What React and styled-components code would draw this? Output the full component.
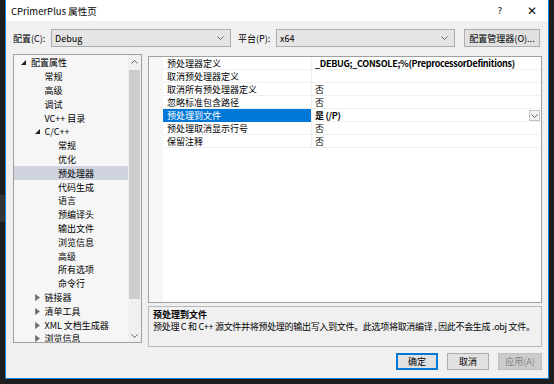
import React from "react";
import styled, { createGlobalStyle, css } from "styled-components";

const Global = createGlobalStyle`
  html, body { margin: 0; padding: 0; }
  body { background: #1e1e1e; font-family: "Noto Sans CJK SC", "Noto Sans", sans-serif; }
  * { box-sizing: border-box; }
`;

const Page = styled.div`
  width: 554px;
  height: 384px;
  overflow: hidden;
  padding: 0 5px 5px 5px;
  background:
    linear-gradient(#343434, #343434) 0 195px / 5px 27px no-repeat,
    #1e1e1e;
`;

const Window = styled.div`
  width: 544px;
  height: 379px;
  display: flex;
  flex-direction: column;
  border: 1px solid #1883d7;
  border-top: none;
  background: #f0f0f0;
  overflow: hidden;
`;

const TitleBar = styled.div`
  height: 21px;
  flex: none;
  background: #fff;
  display: flex;
  align-items: center;
  padding: 0 0 0 5px;
  font-size: 9.5px;
  color: #000;
`;

const Title = styled.span`
  flex: 1;
`;

const TitleBtn = styled.span`
  width: 32px;
  text-align: center;
  font-size: ${(p) => p.$size || 10}px;
  color: #111;
  font-family: "DejaVu Sans", sans-serif;
`;

const Body = styled.div`
  flex: 1;
  min-width: 0;
  display: flex;
  flex-direction: column;
  padding: 0 6px 8px 7px;
  font-size: 9px;
  color: #000;
`;

const ConfigRow = styled.div`
  display: flex;
  align-items: center;
  margin-top: 8px;
  height: 18px;
`;

const Label = styled.span`
  width: ${(p) => p.$w}px;
  flex: none;
`;

const Combo = styled.div`
  width: ${(p) => p.$w}px;
  height: 18px;
  flex: none;
  border: 1px solid #acacac;
  background: #e5e5e5;
  display: flex;
  align-items: center;
  justify-content: space-between;
  padding: 0 6px 0 3px;
  margin-right: ${(p) => p.$mr || 0}px;
`;

const PushButton = styled.div`
  height: ${(p) => p.$h || 17}px;
  width: ${(p) => p.$w}px;
  flex: none;
  display: flex;
  align-items: center;
  justify-content: center;
  background: ${(p) => (p.$disabled ? "#cccccc" : "#e1e1e1")};
  border: 1px solid
    ${(p) => (p.$primary ? "#0078d7" : p.$disabled ? "#bfbfbf" : "#adadad")};
  color: ${(p) => (p.$disabled ? "#838383" : "#000")};
  ${(p) =>
    p.$primary &&
    css`
      box-shadow: inset 0 0 0 1px #0078d7;
    `}
`;

const Main = styled.div`
  display: flex;
  margin-top: 7px;
  gap: 6px;
  min-width: 0;
`;

const Tree = styled.div`
  width: 129px;
  height: 289px;
  flex: none;
  border: 1px solid #a0a0a0;
  background: #f6f6f6;
  display: flex;
  overflow: hidden;
`;

const TreeList = styled.div`
  flex: 1;
  padding-top: 1px;
  overflow: hidden;
`;

const TreeRow = styled.div`
  height: 13.8px;
  display: flex;
  align-items: center;
  padding-left: ${(p) => 7 + p.$level * 13.5}px;
  background: ${(p) => (p.$sel ? "#cfd3e0" : "transparent")};
  white-space: nowrap;
`;

const Expander = styled.span`
  width: 10px;
  flex: none;
  display: flex;
  align-items: center;
`;

const ScrollBar = styled.div`
  width: 13px;
  flex: none;
  background: #f0f0f0;
  display: flex;
  flex-direction: column;
  align-items: center;
`;

const ScrollArrow = styled.div`
  height: 13px;
  display: flex;
  align-items: center;
  justify-content: center;
`;

const ScrollThumb = styled.div`
  width: 11px;
  height: ${(p) => p.$h}px;
  background: #cdcdcd;
  margin-top: 2px;
`;

const Spacer = styled.div`
  flex: 1;
`;

const RightCol = styled.div`
  flex: 1;
  min-width: 0;
  display: flex;
  flex-direction: column;
  gap: 3px;
  margin-top: 2px;
`;

const Grid = styled.div`
  height: 247px;
  border: 1px solid #a0a0a0;
  background: #fff;
  display: flex;
`;

const Gutter = styled.div`
  width: 14px;
  flex: none;
  background: #f7f7f7;
`;

const GridRows = styled.div`
  flex: 1;
  min-width: 0;
  display: flex;
  flex-direction: column;
`;

const GridRow = styled.div`
  height: 13px;
  display: grid;
  grid-template-columns: 149px minmax(0, 1fr);
  border-bottom: 1px solid #f0f0f0;
`;

const NameCell = styled.div`
  padding-left: 4px;
  display: flex;
  align-items: center;
  border-right: 1px solid #f0f0f0;
  background: ${(p) => (p.$sel ? "#0078d7" : "transparent")};
  color: ${(p) => (p.$sel ? "#fff" : "#000")};
  white-space: nowrap;
`;

const ValueCell = styled.div`
  padding-left: 3px;
  display: flex;
  align-items: center;
  justify-content: space-between;
  font-weight: ${(p) => (p.$bold ? 700 : 400)};
  letter-spacing: ${(p) => (p.$bold ? "-0.3px" : "0")};
  white-space: nowrap;
  overflow: hidden;
`;

const DropBtn = styled.span`
  width: 11px;
  height: 11px;
  margin-right: 1px;
  border: 1px solid #c4c4c4;
  background: #f2f2f2;
  display: flex;
  align-items: center;
  justify-content: center;
`;

const Desc = styled.div`
  height: 41px;
  border: 1px solid #b9b9b9;
  background: #f0f0f0;
  padding: 2px 4px;
  display: flex;
  flex-direction: column;
  overflow: hidden;
`;

const DescTitle = styled.div`
  font-weight: 700;
  line-height: 12px;
`;

const DescText = styled.div`
  line-height: 12px;
  white-space: nowrap;
  letter-spacing: -0.3px;
`;

const ButtonRow = styled.div`
  display: flex;
  justify-content: flex-end;
  gap: 9px;
  margin-top: 6px;
`;

const Chevron = ({ up }) => (
  <svg width="7" height="4" viewBox="0 0 7 4">
    <polyline
      points={up ? "0.5,3.5 3.5,0.5 6.5,3.5" : "0.5,0.5 3.5,3.5 6.5,0.5"}
      fill="none"
      stroke="#606060"
      strokeWidth="1"
    />
  </svg>
);

const ExpandIcon = ({ open }) =>
  open ? (
    <svg width="5" height="5" viewBox="0 0 5 5">
      <polygon points="5,0 5,5 0,5" fill="#1e1e1e" />
    </svg>
  ) : (
    <svg width="5" height="7" viewBox="0 0 5 7">
      <polygon points="0.5,0.5 4.5,3.5 0.5,6.5" fill="#6a6a6a" stroke="#6a6a6a" strokeWidth="0.6" />
    </svg>
  );

const tree = [
  { l: 0, t: "配置属性", e: "open" },
  { l: 1, t: "常规" },
  { l: 1, t: "高级" },
  { l: 1, t: "调试" },
  { l: 1, t: "VC++ 目录" },
  { l: 1, t: "C/C++", e: "open" },
  { l: 2, t: "常规" },
  { l: 2, t: "优化" },
  { l: 2, t: "预处理器", sel: true },
  { l: 2, t: "代码生成" },
  { l: 2, t: "语言" },
  { l: 2, t: "预编译头" },
  { l: 2, t: "输出文件" },
  { l: 2, t: "浏览信息" },
  { l: 2, t: "高级" },
  { l: 2, t: "所有选项" },
  { l: 2, t: "命令行" },
  { l: 1, t: "链接器", e: "closed" },
  { l: 1, t: "清单工具", e: "closed" },
  { l: 1, t: "XML 文档生成器", e: "closed" },
  { l: 1, t: "浏览信息", e: "closed" },
];

const props = [
  { n: "预处理器定义", v: "_DEBUG;_CONSOLE;%(PreprocessorDefinitions)", bold: true },
  { n: "取消预处理器定义", v: "" },
  { n: "取消所有预处理器定义", v: "否" },
  { n: "忽略标准包含路径", v: "否" },
  { n: "预处理到文件", v: "是 (/P)", bold: true, sel: true },
  { n: "预处理取消显示行号", v: "否" },
  { n: "保留注释", v: "否" },
];

export default function App() {
  return (
    <>
      <Global />
      <Page>
        <Window>
          <TitleBar>
            <Title>CPrimerPlus 属性页</Title>
            <TitleBtn $size={9}>?</TitleBtn>
            <TitleBtn $size={12}>✕</TitleBtn>
          </TitleBar>
          <Body>
            <ConfigRow>
              <Label $w={38}>配置(C):</Label>
              <Combo $w={180} $mr={7}>
                <span>Debug</span>
                <Chevron />
              </Combo>
              <Label $w={38}>平台(P):</Label>
              <Combo $w={179} $mr={9}>
                <span>x64</span>
                <Chevron />
              </Combo>
              <PushButton $w={76} $h={18}>配置管理器(O)...</PushButton>
            </ConfigRow>
            <Main>
              <Tree>
                <TreeList>
                  {tree.map((it, i) => (
                    <TreeRow key={i} $level={it.l} $sel={it.sel}>
                      <Expander>{it.e && <ExpandIcon open={it.e === "open"} />}</Expander>
                      <span>{it.t}</span>
                    </TreeRow>
                  ))}
                </TreeList>
                <ScrollBar>
                  <ScrollArrow>
                    <Chevron up />
                  </ScrollArrow>
                  <ScrollThumb $h={229} />
                  <Spacer />
                  <ScrollArrow>
                    <Chevron />
                  </ScrollArrow>
                </ScrollBar>
              </Tree>
              <RightCol>
                <Grid>
                  <Gutter />
                  <GridRows>
                    {props.map((p, i) => (
                      <GridRow key={i}>
                        <NameCell $sel={p.sel}>{p.n}</NameCell>
                        <ValueCell $bold={p.bold}>
                          <span>{p.v}</span>
                          {p.sel && (
                            <DropBtn>
                              <Chevron />
                            </DropBtn>
                          )}
                        </ValueCell>
                      </GridRow>
                    ))}
                  </GridRows>
                </Grid>
                <Desc>
                  <DescTitle>预处理到文件</DescTitle>
                  <DescText>
                    预处理 C 和 C++ 源文件并将预处理的输出写入到文件。此选项将取消编译 , 因此不会生成 .obj 文件。
                  </DescText>
                </Desc>
              </RightCol>
            </Main>
            <ButtonRow>
              <PushButton $w={42} $primary>确定</PushButton>
              <PushButton $w={42}>取消</PushButton>
              <PushButton $w={44} $disabled>应用(A)</PushButton>
            </ButtonRow>
          </Body>
        </Window>
      </Page>
    </>
  );
}
